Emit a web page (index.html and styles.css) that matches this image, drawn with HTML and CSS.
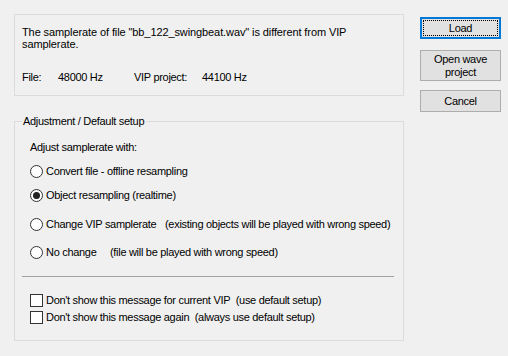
FILE: index.html
```html
<!DOCTYPE html>
<html>
<head>
<meta charset="utf-8">
<link rel="stylesheet" href="styles.css">
</head>
<body>
<div class="dialog">
  <div class="main">
    <div class="info">
      <p class="msg">The samplerate of file "bb_122_swingbeat.wav" is different from VIP<br>samplerate.</p>
      <div class="rates">
        <span class="lbl-file">File:</span><span class="val-file">48000 Hz</span>
        <span class="lbl-vip">VIP project:</span><span class="val-vip">44100 Hz</span>
      </div>
    </div>
    <fieldset class="group">
      <legend class="legend">Adjustment / Default setup</legend>
      <div class="sub">Adjust samplerate with:</div>
      <label class="opt opt1"><span class="radio"></span>Convert file - offline resampling</label>
      <label class="opt opt2"><span class="radio checked"></span>Object resampling (realtime)</label>
      <label class="opt opt3"><span class="radio"></span><span class="main-txt w1">Change VIP samplerate</span>(existing objects will be played with wrong speed)</label>
      <label class="opt opt4"><span class="radio"></span><span class="main-txt w2">No change</span>(file will be played with wrong speed)</label>
      <div class="sep"></div>
      <label class="chk chk1"><span class="box"></span>Don't show this message for current VIP&nbsp; (use default setup)</label>
      <label class="chk chk2"><span class="box"></span>Don't show this message again&nbsp; (always use default setup)</label>
    </fieldset>
  </div>
  <div class="buttons">
    <button class="btn btn-load"><span class="focus">Load</span></button>
    <button class="btn btn-open">Open wave<br>project</button>
    <button class="btn btn-cancel">Cancel</button>
  </div>
</div>
</body>
</html>
```
FILE: styles.css
```css
html, body {
  margin: 0;
  padding: 0;
  background: #f0f0f0;
  width: 508px;
  height: 356px;
  overflow: hidden;
}
body {
  font-family: "Liberation Sans", Arial, sans-serif;
  font-size: 11px;
  letter-spacing: -0.3px;
  color: #000;
}
.dialog {
  display: flex;
  align-items: flex-start;
  padding: 14px 0 0 14px;
  gap: 16px;
}
.main {
  width: 390px;
  display: flex;
  flex-direction: column;
}
.info {
  box-sizing: border-box;
  height: 82px;
  border: 1px solid #dcdcdc;
  padding: 11px 0 0 7px;
}
.msg {
  margin: 0;
  line-height: 12px;
  white-space: nowrap;
  letter-spacing: -0.1px;
}
.rates {
  margin-top: 21px;
  line-height: 13px;
  display: flex;
  white-space: pre;
}
.lbl-file { width: 36px; }
.val-file { width: 76px; }
.lbl-vip { width: 68px; }
.group {
  box-sizing: border-box;
  margin: 19px 0 0 0;
  padding: 0 0 0 7px;
  height: 226px;
  border: 1px solid #dcdcdc;
  min-width: 0;
}
.legend {
  padding: 0 2px 0 1px;
  margin-left: 0;
  line-height: 13px;
}
.sub {
  margin: 13px 0 0 8px;
  line-height: 13px;
}
.opt {
  display: flex;
  align-items: center;
  line-height: 13px;
  margin-left: 8px;
  white-space: nowrap;
}
.opt1 { margin-top: 11px; }
.opt2 { margin-top: 11px; }
.opt3 { margin-top: 16px; }
.opt4 { margin-top: 15px; }
.main-txt { display: inline-block; }
.w1 { width: 119px; }
.w2 { width: 64px; }
.radio {
  box-sizing: border-box;
  flex: none;
  width: 13px;
  height: 13px;
  border: 1px solid #333;
  border-radius: 50%;
  background: #fff;
  margin-right: 3px;
  display: flex;
  align-items: center;
  justify-content: center;
}
.radio.checked::after {
  content: "";
  width: 7px;
  height: 7px;
  border-radius: 50%;
  background: #222;
}
.sep {
  margin: 17px 0 0 0;
  width: 372px;
  height: 1px;
  background: #a0a0a0;
}
.chk {
  display: flex;
  align-items: center;
  line-height: 13px;
  margin-left: 8px;
  white-space: nowrap;
}
.chk1 { margin-top: 17px; }
.chk2 { margin-top: 4px; }
.box {
  box-sizing: border-box;
  flex: none;
  width: 13px;
  height: 13px;
  border: 1px solid #333;
  background: #fff;
  margin-right: 3px;
}
.buttons {
  display: flex;
  flex-direction: column;
  padding-top: 3px;
}
.btn {
  box-sizing: border-box;
  width: 81px;
  height: 22px;
  background: #e1e1e1;
  border: 1px solid #adadad;
  font: inherit;
  letter-spacing: inherit;
  color: #000;
  padding: 0;
  line-height: 13px;
  display: flex;
  align-items: center;
  justify-content: center;
  text-align: center;
}
.btn-load {
  border: 2px solid #0078d7;
  padding: 1px;
}
.focus {
  box-sizing: border-box;
  width: 100%;
  height: 100%;
  border: 1px dotted #000;
  display: flex;
  align-items: center;
  justify-content: center;
}
.btn-open {
  margin-top: 11px;
  height: 31px;
}
.btn-cancel {
  margin-top: 9px;
}
```
